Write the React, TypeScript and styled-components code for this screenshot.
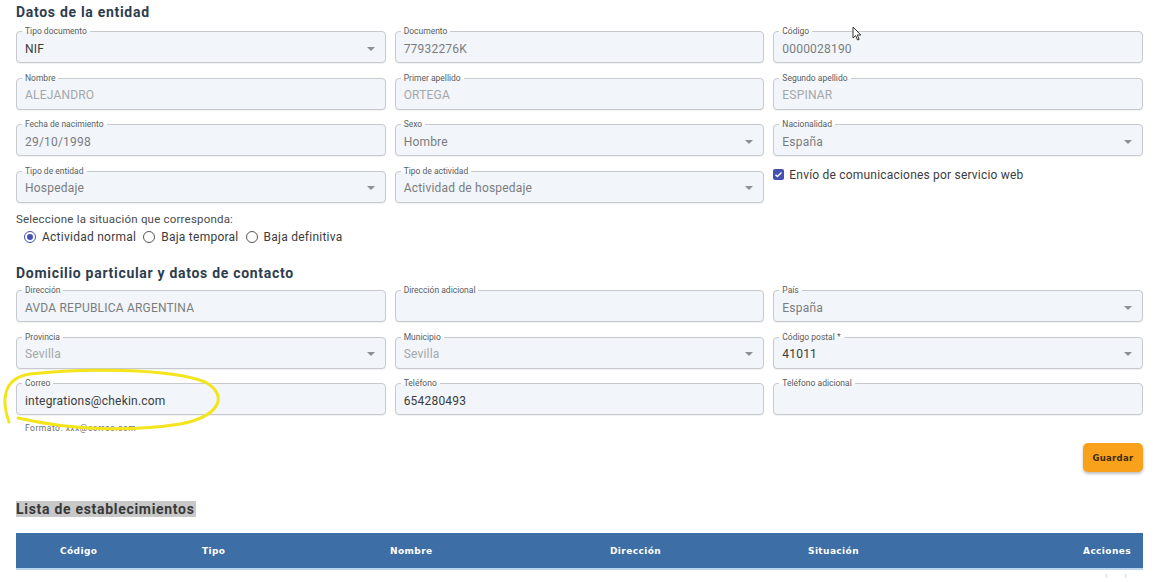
import React from 'react';
import styled, {createGlobalStyle, css} from 'styled-components';

const GlobalStyle = createGlobalStyle`
  html, body {
    margin: 0;
    padding: 0;
    background: #ffffff;
    font-family: Roboto, 'Liberation Sans', Arial, sans-serif;
    color: #444;
  }
`;

const Page = styled.div`
  position: relative;
  width: 1168px;
  height: 582px;
  overflow: hidden;
  padding: 4px 25px 0 16px;
  box-sizing: border-box;
`;

const SectionTitle = styled.h2<{$top?: number}>`
  margin: ${p => p.$top ?? 0}px 0 0 0;
  font-size: 14px;
  line-height: 16px;
  font-weight: 700;
  letter-spacing: 0.7px;
  color: #2e3d4d;
`;

const FieldGrid = styled.div<{$top: number}>`
  display: grid;
  grid-template-columns: repeat(3, 1fr);
  column-gap: 9px;
  row-gap: 14.5px;
  margin-top: ${p => p.$top}px;
`;

type Tone = 'dark' | 'mid' | 'light';

const toneColor: Record<Tone, string> = {
  dark: '#3c3c3c',
  mid: '#7a7d80',
  light: '#a4a7aa',
};

const FieldBox = styled.div`
  position: relative;
  height: 32px;
  box-sizing: border-box;
  border: 1px solid #c6cace;
  border-radius: 4px;
  background: #f2f5f9;
  box-shadow: 0 1px 1px rgba(0, 0, 0, 0.06);
  display: flex;
  align-items: center;
  padding: 3px 8px 0 8px;
`;

const FieldLabel = styled.span`
  position: absolute;
  top: -6px;
  left: 5px;
  padding: 0 3px;
  font-size: 8.5px;
  line-height: 10px;
  color: #5a5d60;
  background: linear-gradient(to bottom, #ffffff 55%, #f2f5f9 55%);
  white-space: nowrap;
`;

const FieldValue = styled.span<{$tone: Tone}>`
  flex: 1;
  font-size: 12px;
  letter-spacing: 0.2px;
  color: ${p => toneColor[p.$tone]};
  white-space: nowrap;
`;

const Caret = styled.span`
  width: 0;
  height: 0;
  border-left: 4px solid transparent;
  border-right: 4px solid transparent;
  border-top: 4px solid #8d9093;
  margin-right: 2px;
`;

type FieldProps = {
  label: string;
  value?: string;
  tone?: Tone;
  select?: boolean;
};

function Field({label, value = '', tone = 'mid', select}: FieldProps) {
  return (
    <FieldBox>
      <FieldLabel>{label}</FieldLabel>
      <FieldValue $tone={tone}>{value}</FieldValue>
      {select && <Caret />}
    </FieldBox>
  );
}

const CheckRow = styled.label`
  display: flex;
  align-items: center;
  gap: 5px;
  margin-top: -3px;
  height: 14px;
  font-size: 12px;
  line-height: 14px;
  letter-spacing: 0.2px;
  color: #3c3c3c;
`;

const CheckBox = styled.span`
  width: 11px;
  height: 11px;
  border-radius: 2px;
  background: #4451b3;
  display: flex;
  align-items: center;
  justify-content: center;
`;

const Prompt = styled.p`
  margin: 9.5px 0 0 0;
  font-size: 11.5px;
  line-height: 14px;
  color: #4a4a4a;
  letter-spacing: 0.2px;
`;

const RadioGroup = styled.div`
  display: flex;
  align-items: center;
  gap: 7px;
  height: 18px;
  margin-top: 2px;
  padding-left: 8px;
`;

const RadioOption = styled.label`
  display: flex;
  align-items: center;
  gap: 6px;
  font-size: 12px;
  letter-spacing: 0.25px;
  color: #3c3c3c;
`;

const RadioDot = styled.span<{$checked?: boolean}>`
  width: 12px;
  height: 12px;
  box-sizing: border-box;
  border-radius: 50%;
  border: 1.5px solid #555;
  display: flex;
  align-items: center;
  justify-content: center;
  ${p =>
    p.$checked &&
    css`
      border-color: #4451b3;
      &::after {
        content: '';
        width: 6px;
        height: 6px;
        border-radius: 50%;
        background: #4451b3;
      }
    `}
`;

const Helper = styled.div`
  margin-top: 8px;
  padding-left: 9px;
  font-size: 8.5px;
  line-height: 10px;
  color: #6a6a6a;
  letter-spacing: 0.5px;
`;

const Actions = styled.div`
  display: flex;
  justify-content: flex-end;
  margin-top: 10px;
`;

const SaveButton = styled.button`
  width: 60px;
  height: 29px;
  border: none;
  border-radius: 5px;
  background: #f9a11b;
  color: #3e2c0c;
  font-family: 'DejaVu Sans', Verdana, sans-serif;
  font-size: 8.5px;
  font-weight: 700;
  letter-spacing: 0.3px;
  box-shadow: 0 2px 3px rgba(0, 0, 0, 0.25);
  cursor: pointer;
`;

const ListTitle = styled.h3`
  margin: 29px 0 0 0;
  display: inline-block;
  background: #c8c8c8;
  font-size: 14px;
  line-height: 16px;
  font-weight: 700;
  letter-spacing: 0.7px;
  color: #383838;
  padding-right: 1px;
`;

const Table = styled.div`
  margin-top: 15px;
`;

const HeadRow = styled.div`
  display: grid;
  grid-template-columns: 142px 188px 220px 198px 1fr auto;
  align-items: center;
  height: 35px;
  padding: 0 12px 0 44px;
  background: #3d6ea6;
  border-bottom: 2px solid #bcd5ee;
  color: #ffffff;
  font-family: 'DejaVu Sans', Verdana, sans-serif;
  font-size: 9px;
  font-weight: 700;
  letter-spacing: 0.4px;
`;

const BodyRow = styled.div`
  display: flex;
  justify-content: flex-end;
  gap: 16px;
  padding: 1px 16px 0 0;
  color: #d2d2d2;
  font-size: 10px;
  line-height: 10px;
`;

const Annotation = styled.svg`
  position: absolute;
  left: 0;
  top: 360px;
  pointer-events: none;
`;

const Cursor = styled.svg`
  position: absolute;
  left: 852px;
  top: 26px;
  pointer-events: none;
`;

export default function App() {
  return (
    <>
      <GlobalStyle />
      <Page>
        <SectionTitle>Datos de la entidad</SectionTitle>
        <FieldGrid $top={11}>
          <Field label="Tipo documento" value="NIF" tone="dark" select />
          <Field label="Documento" value="77932276K" tone="mid" />
          <Field label="Código" value="0000028190" tone="mid" />
          <Field label="Nombre" value="ALEJANDRO" tone="light" />
          <Field label="Primer apellido" value="ORTEGA" tone="light" />
          <Field label="Segundo apellido" value="ESPINAR" tone="light" />
          <Field label="Fecha de nacimiento" value="29/10/1998" tone="mid" />
          <Field label="Sexo" value="Hombre" tone="mid" select />
          <Field label="Nacionalidad" value="España" tone="mid" select />
          <Field label="Tipo de entidad" value="Hospedaje" tone="mid" select />
          <Field label="Tipo de actividad" value="Actividad de hospedaje" tone="mid" select />
          <CheckRow>
            <CheckBox>
              <svg width="9" height="9" viewBox="0 0 24 24" fill="none" stroke="#fff" strokeWidth="3.5">
                <path d="M4 12.5l5 5L20 6.5" />
              </svg>
            </CheckBox>
            Envío de comunicaciones por servicio web
          </CheckRow>
        </FieldGrid>

        <Prompt>Seleccione la situación que corresponda:</Prompt>
        <RadioGroup>
          <RadioOption>
            <RadioDot $checked />
            Actividad normal
          </RadioOption>
          <RadioOption>
            <RadioDot />
            Baja temporal
          </RadioOption>
          <RadioOption>
            <RadioDot />
            Baja definitiva
          </RadioOption>
        </RadioGroup>

        <SectionTitle $top={19}>Domicilio particular y datos de contacto</SectionTitle>
        <FieldGrid $top={9}>
          <Field label="Dirección" value="AVDA REPUBLICA ARGENTINA" tone="mid" />
          <Field label="Dirección adicional" />
          <Field label="País" value="España" tone="mid" select />
          <Field label="Provincia" value="Sevilla" tone="light" select />
          <Field label="Municipio" value="Sevilla" tone="light" select />
          <Field label="Código postal *" value="41011" tone="dark" select />
          <Field label="Correo" value="integrations@chekin.com" tone="dark" />
          <Field label="Teléfono" value="654280493" tone="dark" />
          <Field label="Teléfono adicional" />
        </FieldGrid>
        <Helper>Formato: xxx@correo.com</Helper>

        <Actions>
          <SaveButton>Guardar</SaveButton>
        </Actions>

        <ListTitle>Lista de establecimientos</ListTitle>

        <Table>
          <HeadRow>
            <span>Código</span>
            <span>Tipo</span>
            <span>Nombre</span>
            <span>Dirección</span>
            <span>Situación</span>
            <span>Acciones</span>
          </HeadRow>
          <BodyRow>
            <span>‹</span>
            <span>›</span>
          </BodyRow>
        </Table>

        <Annotation width="240" height="80" viewBox="0 0 240 80">
          <path
            d="M9 62 C1 40, 3 18, 30 14 C80 8, 170 8, 205 22 C228 34, 222 56, 180 64 C130 72, 70 70, 18 58"
            fill="none"
            stroke="#f4e41c"
            strokeWidth="3"
            strokeLinecap="round"
          />
        </Annotation>

        <Cursor width="10" height="16" viewBox="0 0 10 16">
          <path d="M1 1 L1 12 L3.6 9.6 L5.6 14 L7.2 13.3 L5.3 9 L8.8 9 Z" fill="#fff" stroke="#333" strokeWidth="1" />
        </Cursor>
      </Page>
    </>
  );
}
